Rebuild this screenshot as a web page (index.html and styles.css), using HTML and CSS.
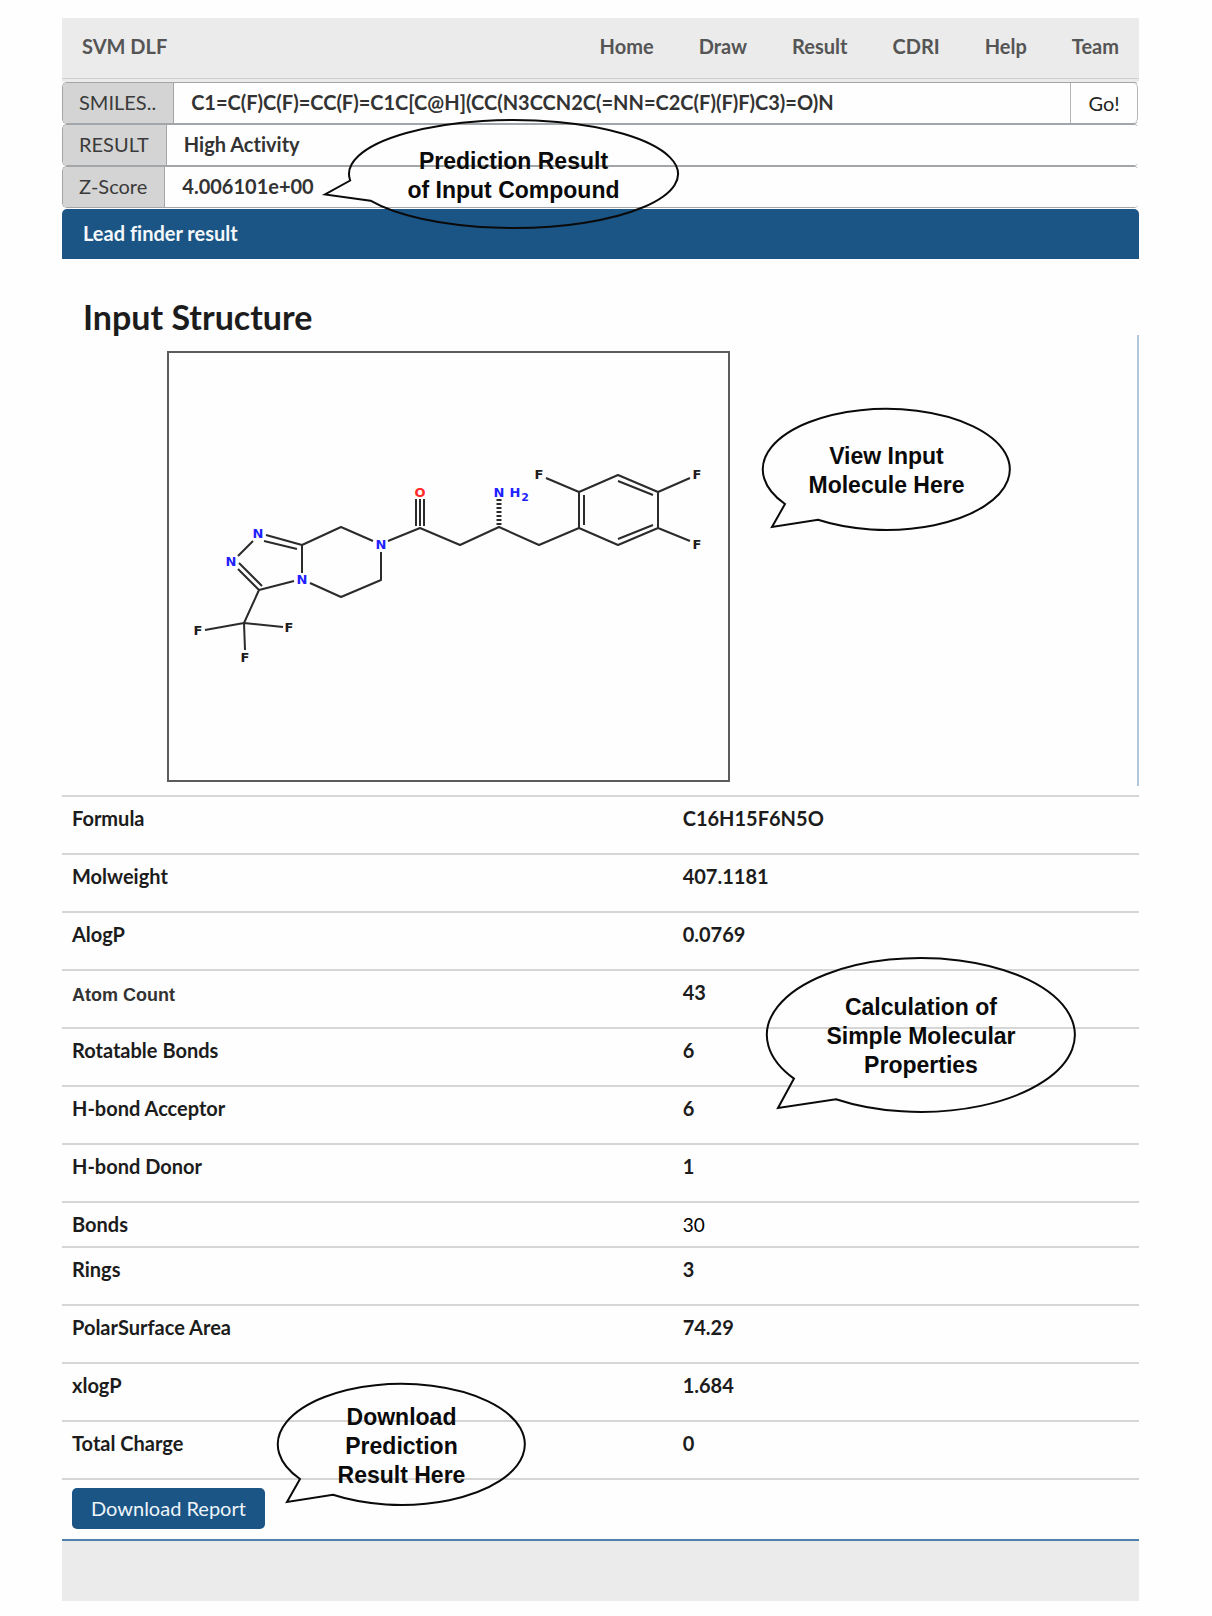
FILE: index.html
```html
<!DOCTYPE html>
<html lang="en">
<head>
<meta charset="utf-8">
<title>SVM DLF - Result</title>
<meta name="viewport" content="width=device-width, initial-scale=1">
<link rel="stylesheet" href="styles.css">
</head>
<body>
<div class="page">
  <header class="topbar">
    <a class="brand" href="#">SVM DLF</a>
    <nav class="menu">
      <a href="#">Home</a>
      <a href="#">Draw</a>
      <a href="#">Result</a>
      <a href="#">CDRI</a>
      <a href="#">Help</a>
      <a href="#">Team</a>
    </nav>
  </header>

  <form class="query">
    <div class="field">
      <label for="smiles">SMILES..</label>
      <input id="smiles" type="text" value="C1=C(F)C(F)=CC(F)=C1C[C@H](CC(N3CCN2C(=NN=C2C(F)(F)F)C3)=O)N">
      <button class="go" type="button">Go!</button>
    </div>
    <div class="field">
      <label for="result">RESULT</label>
      <input id="result" type="text" value="High Activity" readonly>
    </div>
    <div class="field">
      <label for="zscore">Z-Score</label>
      <input id="zscore" type="text" value="4.006101e+00" readonly>
    </div>
    <div class="callout callout-prediction">
      <svg viewBox="0 0 329 108" aria-hidden="true"><path d="M1.2 60.5L-24 74.5L21.5 80.7A164.5 54 0 1 0 1.2 60.5Z"/></svg>
      <p>Prediction Result<br>of Input Compound</p>
    </div>
  </form>

  <main>
    <h2 class="panel-title">Lead finder result</h2>
    <h1 class="heading">Input Structure</h1>

    <section class="structure">
      <svg class="molecule" viewBox="170 353 559 427" role="img" aria-label="Input molecule">
        <g class="bonds">
          <path d="M267 535L303 545M265 541L298 549M254 541L239 556M240 563L263 586M239 569L260 590M260 590L295 581M303 545V573M260 590L245 623M245 623L206 630M245 623L284 627M245 623L246 650"/>
          <path d="M303 545L342 527L374 541M382 552V580L342 597L311 583M389 541L421 528L461 545L500 527L540 545L580 528"/>
          <path d="M417 499V526M421 499V526M425 499V526"/>
          <path d="M580 528V492L619 475L659 492V528L619 545ZM585 525V495M619 481L654 495M619 539L654 525M580 492L547 478M659 492L691 478M659 528L691 541"/>
          <path class="hash" d="M500 525V498"/>
        </g>
        <g class="atoms">
          <text class="n" x="259" y="538">N</text>
          <text class="n" x="232" y="566">N</text>
          <text class="n" x="303" y="584">N</text>
          <text class="n" x="382" y="549">N</text>
          <text class="n" x="500" y="497">N</text>
          <text class="n" x="516" y="497">H</text>
          <text class="n sub" x="526" y="501">2</text>
          <text class="o" x="421" y="497">O</text>
          <text x="199" y="635">F</text>
          <text x="290" y="632">F</text>
          <text x="246" y="662">F</text>
          <text x="540" y="479">F</text>
          <text x="698" y="479">F</text>
          <text x="698" y="549">F</text>
        </g>
      </svg>
      <div class="callout callout-view">
        <svg viewBox="0 0 247 121" aria-hidden="true"><path d="M22 95L9 118L55 110.8A123.5 60.5 0 1 0 22 95Z"/></svg>
        <p>View Input<br>Molecule Here</p>
      </div>
    </section>

    <section class="properties">
      <table>
        <tbody>
          <tr><th scope="row">Formula</th><td>C16H15F6N5O</td></tr>
          <tr><th scope="row">Molweight</th><td>407.1181</td></tr>
          <tr><th scope="row">AlogP</th><td>0.0769</td></tr>
          <tr><th scope="row" class="edited-label">Atom Count</th><td>43</td></tr>
          <tr><th scope="row">Rotatable Bonds</th><td>6</td></tr>
          <tr><th scope="row">H-bond Acceptor</th><td>6</td></tr>
          <tr><th scope="row">H-bond Donor</th><td>1</td></tr>
          <tr class="short"><th scope="row">Bonds</th><td class="edited-value">30</td></tr>
          <tr><th scope="row">Rings</th><td>3</td></tr>
          <tr><th scope="row">PolarSurface Area</th><td>74.29</td></tr>
          <tr><th scope="row">xlogP</th><td>1.684</td></tr>
          <tr><th scope="row">Total Charge</th><td>0</td></tr>
        </tbody>
      </table>
      <div class="actions"><button class="download" type="button">Download Report</button></div>
      <div class="callout callout-properties">
        <svg viewBox="0 0 308 154" aria-hidden="true"><path d="M27 120.6L11 150L69 141.2A154 77 0 1 0 27 120.6Z"/></svg>
        <p>Calculation of<br>Simple Molecular<br>Properties</p>
      </div>
      <div class="callout callout-download">
        <svg viewBox="0 0 247 121" aria-hidden="true"><path d="M22 95L9 118L55 110.8A123.5 60.5 0 1 0 22 95Z"/></svg>
        <p>Download<br>Prediction<br>Result Here</p>
      </div>
    </section>
  </main>
  <footer class="footer"></footer>
</div>
</body>
</html>
```

FILE: styles.css
```css
* {
  box-sizing: border-box;
}

body {
  margin: 0;
  background: #fefefe;
  color: #1c1c1c;
  font-family: Lato, "Liberation Sans", sans-serif;
  font-size: 20px;
  font-variant-ligatures: none;
  line-height: 25px;
}

.page {
  padding: 18px 73px 15px 62px;
}

/* Top bar */
.topbar {
  display: flex;
  align-items: center;
  justify-content: space-between;
  height: 64px;
  padding: 0 20px 8px;
  background: linear-gradient(#cfcfcf, #cfcfcf) 0 60px / 100% 1px no-repeat #ebebeb;
  font-weight: 700;
}

.topbar a {
  color: #555;
  text-decoration: none;
}

.menu {
  display: flex;
  gap: 45px;
}

/* Query fields */
.query {
  position: relative;
  padding-bottom: 1px;
}

.field {
  display: flex;
  height: 42px;
  border: 1px solid #a3a6a8;
  border-right-color: transparent;
  border-radius: 5px;
  overflow: hidden;
}

.field label {
  padding: 7px 17px 7px 16px;
  background: #d4d4d4;
  border-right: 1px solid #a3a6a8;
  color: #3a3a3a;
}

.field input {
  flex: 1;
  min-width: 0;
  padding: 0 17px 2px;
  border: 0;
  background: #fefefe;
  color: #333;
  font: inherit;
  font-variant-ligatures: none;
  font-weight: 700;
}

.go {
  width: 68px;
  border: 1px solid #b4b4b4;
  border-width: 0 1px 0 1px;
  border-radius: 0 5px 5px 0;
  background: #fefefe;
  color: #222;
  font: inherit;
}

/* Result panel */
.panel-title {
  margin: 0;
  padding: 12px 21px 13px;
  border-radius: 5px 5px 0 0;
  background: #1a5585;
  color: #f4f8fb;
  font-size: 20px;
  line-height: 25px;
}

.heading {
  margin: 0;
  padding: 40px 21px 0;
  font-size: 34px;
  line-height: 36px;
}

.structure {
  position: relative;
  padding: 16px 0 4px 105px;
  border-right: 2px solid #b3c7dc;
}

.molecule {
  display: block;
  width: 563px;
  max-width: 100%;
  border: 2px solid #5c5c5c;
}

.bonds {
  fill: none;
  stroke: #2b2b2b;
  stroke-width: 2;
  stroke-linejoin: round;
}

.bonds .hash {
  stroke-width: 5;
  stroke-dasharray: 2 2;
}

.atoms {
  fill: #1c1c1c;
  font-family: "DejaVu Sans", sans-serif;
  font-size: 13px;
  font-weight: 700;
  text-anchor: middle;
}

.atoms .n {
  fill: #2121ff;
}

.atoms .o {
  fill: #ff2a2a;
}

.atoms .sub {
  font-size: 11px;
}

/* Properties */
.properties {
  position: relative;
  margin-top: 9px;
}

.properties table {
  width: 100%;
  border-collapse: separate;
  border-spacing: 0;
  table-layout: fixed;
}

.properties th,
.properties td {
  height: 58px;
  padding: 9px 10px 0;
  border-top: 2px solid #d6d6d6;
  font-weight: 700;
  text-align: left;
  vertical-align: top;
}

.properties th {
  width: 56.7%;
}

.properties .short th,
.properties .short td {
  height: 45px;
}

.properties .edited-label {
  padding-top: 12px;
  color: #333;
  font-family: "Liberation Sans", sans-serif;
  font-size: 18px;
}

.properties .edited-value {
  font-size: 19px;
  font-weight: 400;
  color: #000;
}

.actions {
  padding: 8px 10px 10px;
  border-top: 2px solid #d6d6d6;
}

.download {
  display: block;
  padding: 8px 19px;
  border: 0;
  border-radius: 5px;
  background: #1a5585;
  color: #eef4f9;
  font: inherit;
}

.footer {
  height: 62px;
  border-top: 2px solid #4f80b0;
  background: #ebebeb;
}

/* Speech-bubble annotations */
.callout {
  position: absolute;
  display: flex;
  align-items: center;
  justify-content: center;
  color: #0a0a0a;
  font: 700 23px/29px "Liberation Sans", Arial, sans-serif;
  text-align: center;
  white-space: nowrap;
  pointer-events: none;
}

.callout svg {
  position: absolute;
  inset: 0;
  width: 100%;
  height: 100%;
  overflow: visible;
  fill: none;
  stroke: #0a0a0a;
  stroke-width: 2;
}

.callout p {
  margin: 0;
  padding-top: 3px;
}

.callout-prediction {
  left: 287px;
  top: 38px;
  width: 329px;
  height: 108px;
  z-index: 1;
}

.callout-view {
  left: 701px;
  top: 74px;
  width: 247px;
  height: 121px;
}

.callout-properties {
  left: 705px;
  top: 163px;
  width: 308px;
  height: 154px;
}

.callout-download {
  left: 216px;
  bottom: 34px;
  width: 247px;
  height: 121px;
}
```
